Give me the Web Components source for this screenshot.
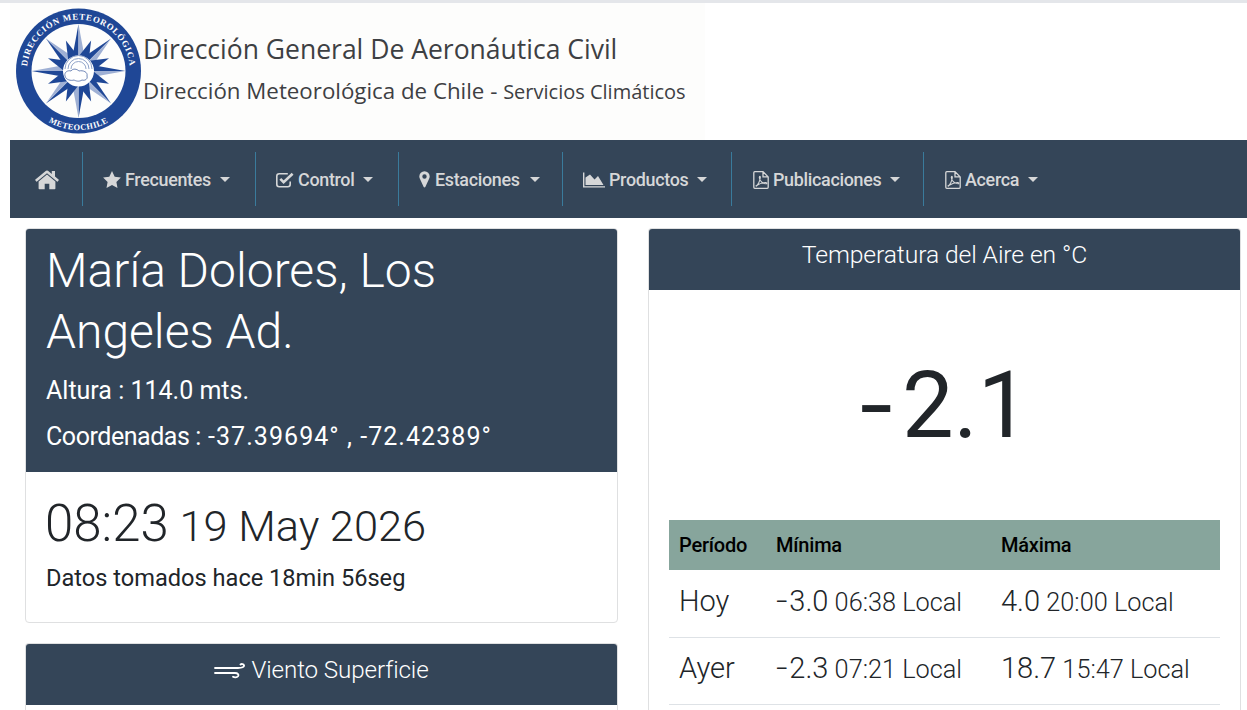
<!DOCTYPE html>
<html lang="es">
<head>
<meta charset="utf-8">
<title>Meteochile</title>
<style>
	html, body { margin: 0; padding: 0; background: #ffffff; overflow: hidden; height: 710px; }
	body { font-family: Roboto, sans-serif; color: #212529; border-top: 3px solid #e4e6ea; box-sizing: border-box; }
	.columns { display: grid; grid-template-columns: 593px 593px; column-gap: 30px; padding: 10px 6px 0 25px; align-items: start; }
	.stack { display: flex; flex-direction: column; gap: 20px; }
</style>
</head>
<body>
<met-banner></met-banner>
<met-nav>
	<nav-item icon="home" w="73"></nav-item>
	<nav-item icon="star" w="173" caret>Frecuentes</nav-item>
	<nav-item icon="check" w="143" caret>Control</nav-item>
	<nav-item icon="marker" w="164" caret>Estaciones</nav-item>
	<nav-item icon="chart" w="169" caret>Productos</nav-item>
	<nav-item icon="pdf" w="192" caret>Publicaciones</nav-item>
	<nav-item icon="pdf" w="130" caret last>Acerca</nav-item>
</met-nav>
<div class="columns">
	<div class="stack">
		<station-card></station-card>
		<met-card heading="Viento Superficie" icon="wind" size="24.2"><div style="height:5px"></div></met-card>
	</div>
	<met-card heading="Temperatura del Aire en °C" size="24.7">
		<temp-panel value="2.1"></temp-panel>
	</met-card>
</div>
<script>
const ICONS = {
	home: `<svg viewBox="0 0 24 20" width="24" height="20"><path fill="currentColor" d="M12 4.6 3.6 11.5v7a.8.8 0 0 0 .8.8h5.3v-5.6h4.6v5.6h5.3a.8.8 0 0 0 .8-.8v-7z"/><path fill="currentColor" d="M23.6 9.6 20 6.6V1h-3.2v2.9L13 .8a1.6 1.6 0 0 0-2 0L.4 9.6a.5.5 0 0 0-.1.7l1 1.1a.5.5 0 0 0 .7.1L12 3.2l10 8.3a.5.5 0 0 0 .7-.1l1-1.1a.5.5 0 0 0-.1-.7z"/></svg>`,
	star: `<svg viewBox="0 0 18 17" width="18" height="17"><path fill="currentColor" d="M9 0l2.700 5.700 6.200.9-4.500 4.300 1.100 6.100L9 14.100l-5.500 2.900 1.100-6.100L.1 6.600l6.200-.9z"/></svg>`,
	check: `<svg viewBox="0 0 18 16" width="18" height="16"><path fill="none" stroke="currentColor" stroke-width="1.6" d="M14.200 9.500v2.800a2.400 2.400 0 0 1-2.400 2.400H3.200a2.400 2.400 0 0 1-2.400-2.400V4.200a2.400 2.400 0 0 1 2.400-2.400h8.600"/><path fill="none" stroke="currentColor" stroke-width="2.600" d="M4.300 6.800l3.300 3.300L16.600 1.800"/></svg>`,
	marker: `<svg viewBox="0 0 11 17" width="11" height="17"><path fill="currentColor" fill-rule="evenodd" d="M5.500.3A5.200 5.200 0 0 0 .3 5.500c0 1 .3 1.700.7 2.500l3.700 7.900a.9.9 0 0 0 1.600 0L10 8c.4-.8.700-1.500.700-2.500A5.200 5.200 0 0 0 5.500.3zm0 7.400a2.200 2.200 0 1 1 0-4.400 2.200 2.200 0 0 1 0 4.400z"/></svg>`,
	chart: `<svg viewBox="0 0 22 16" width="22" height="16"><path fill="currentColor" d="M0 .5h1.400v13.700H22v1.400H0z"/><path fill="currentColor" d="M2.500 13V5.500L7 2.500l4.500 5 3.500-3.500 5.500 9z"/></svg>`,
	pdf: `<svg viewBox="0 0 16 18" width="16" height="18"><path fill="none" stroke="currentColor" stroke-width="1.300" d="M10 .7H1.800a1 1 0 0 0-1 1v14.600a1 1 0 0 0 1 1h12.400a1 1 0 0 0 1-1V5.900zM10 .7v5.200h5.200"/><path fill="none" stroke="currentColor" stroke-width="1.100" d="M3 15c2-1 4-5 4.300-8.500.2-1.500-1-1.500-1 0 .2 3 3 6 6.700 6.300 1.200 0 1.200-1.300 0-1.300-3-.2-6 1-8.800 2.700-.8.600-.8 1.300-1.200.8z"/></svg>`,
	wind: `<svg viewBox="0 0 32 17" width="32" height="17"><path fill="none" stroke="currentColor" stroke-width="1.800" stroke-linecap="round" d="M1 5h23c4 0 6.500-1 6-2.800-.4-1.300-2.500-1.500-3.500-.7M1 10h20c3 0 4 1.800 3 3.300-1 1.300-3.800 1.300-5 .4"/></svg>`
};

// the compass drawn by hand, points generated so both halves stay even
function compassPoints(cx, cy) {
	let out = '';
	for (let i = 0; i < 16; i += 2) {
		const a = i * Math.PI / 8 - Math.PI / 2;
		const r = i % 4 === 0 ? 47 : 46;
		const rIn = 15, w = 0.42;
		const tip = [cx + r * Math.cos(a), cy + r * Math.sin(a)];
		const l = [cx + rIn * Math.cos(a - w), cy + rIn * Math.sin(a - w)];
		const rr = [cx + rIn * Math.cos(a + w), cy + rIn * Math.sin(a + w)];
		const c = [cx + rIn * Math.cos(a), cy + rIn * Math.sin(a)];
		out += `<polygon fill="#1f4796" points="${tip} ${l} ${c}"/><polygon fill="#9fb0d4" points="${tip} ${rr} ${c}"/>`;
	}
	for (let i = 1; i < 16; i += 2) {
		const a = i * Math.PI / 8 - Math.PI / 2;
		const tip = [cx + 33 * Math.cos(a), cy + 33 * Math.sin(a)];
		const l = [cx + 15 * Math.cos(a - 0.36), cy + 15 * Math.sin(a - 0.36)];
		const rr = [cx + 15 * Math.cos(a + 0.36), cy + 15 * Math.sin(a + 0.36)];
		out += `<polygon fill="#1f4796" points="${tip} ${l} ${rr}"/>`;
	}
	return out;
}

class MetBanner extends HTMLElement {
	constructor() {
		super();
		this.attachShadow({ mode: 'open' }).innerHTML = `
			<style>
				:host { display: block; height: 137px; padding-left: 10px; box-sizing: border-box; }
				.img { width: 695px; height: 137px; background: #fdfdfc; display: flex; align-items: stretch; }
				svg { flex: none; width: 133px; height: 137px; }
				.txt { display: flex; flex-direction: column; font-family: "Open Sans", sans-serif; color: #3d4043; white-space: nowrap; }
				.l1 { font-size: 26.500px; line-height: 30px; margin-top: 31px; }
				.l2 { font-size: 22.300px; line-height: 30px; margin-top: 12px; }
				.l2 small { font-size: 20px; }
			</style>
			<div class="img">
				<svg viewBox="10 0 133 137">
					<circle cx="78.5" cy="68" r="62.5" fill="#1f4796"/>
					<circle cx="78.5" cy="68" r="47" fill="#fdfdfc"/>
					${compassPoints(78.5, 68)}
					<circle cx="78.5" cy="68" r="15.500" fill="#fff"/>
					<path fill="none" stroke="#8fa3c9" stroke-width="1" d="M65 66a13.500 13.500 0 0 1 27 0M68 66a10.500 10.500 0 0 1 21 0M71 66a7.500 7.500 0 0 1 15 0"/>
					<path fill="#fff" stroke="#5f78ae" stroke-width=".9" d="M65 73c-1-4 3-6 6-5 2-3 6-2 8 0 4-1 9 1 8 5 1 3-2 5-5 4-3 2-6 1-8 0-3 1-8 0-9-4z"/>
					<path id="arcTop" fill="none" d="M27 68a51.500 51.500 0 0 1 103 0"/>
					<path id="arcBot" fill="none" d="M27.700 98a59 59 0 0 0 101.600 0"/>
					<text font-family="Liberation Serif, serif" font-weight="700" font-size="8.800" fill="#fff" letter-spacing=".75"><textPath href="#arcTop" startOffset="50%" text-anchor="middle">DIRECCIÓN METEOROLÓGICA</textPath></text>
					<text font-family="Liberation Serif, serif" font-weight="700" font-size="8.300" fill="#fff" letter-spacing=".5"><textPath href="#arcBot" startOffset="50%" text-anchor="middle">METEOCHILE</textPath></text>
				</svg>
				<div class="txt">
					<div class="l1">Dirección General De Aeronáutica Civil</div>
					<div class="l2">Dirección Meteorológica de Chile - <small>Servicios Climáticos</small></div>
				</div>
			</div>`;
	}
}

class MetNav extends HTMLElement {
	constructor() {
		super();
		this.attachShadow({ mode: 'open' }).innerHTML = `
			<style>
				:host { display: flex; margin-left: 10px; height: 78px; background: #344558; align-items: center; }
			</style>
			<slot></slot>`;
	}
}

class NavItem extends HTMLElement {
	constructor() {
		super();
		const icon = ICONS[this.getAttribute('icon')] || '';
		const w = this.getAttribute('w');
		const caret = this.hasAttribute('caret') ? '<span class="caret"></span>' : '';
		this.attachShadow({ mode: 'open' }).innerHTML = `
			<style>
				:host {
					display: flex; align-items: center; box-sizing: border-box; width: ${w}px; height: 54px;
					padding: 1px 0 0 20px; gap: 4px; color: #d6d7d8; white-space: nowrap;
					font: 500 17.900px/1 Roboto, sans-serif; letter-spacing: -0.3px;
					border-right: 1px solid #3a7b9c;
				}
				:host([last]) { border-right: none; }
				:host([icon="home"]) { padding: 1px 0 0 25px; }
				:host([icon="marker"]) { gap: 5px; }
				:host([icon="pdf"]) { padding-left: 21px; }
				svg { display: block; flex: none; }
				.caret {
					margin-left: 5px; margin-top: -1px; width: 0; height: 0;
					border-left: 5.500px solid transparent; border-right: 5.500px solid transparent;
					border-top: 5px solid currentColor;
				}
			</style>
			${icon}<slot></slot>${caret}`;
	}
}

class MetCard extends HTMLElement {
	constructor() {
		super();
		const icon = ICONS[this.getAttribute('icon')] || '';
		this.attachShadow({ mode: 'open' }).innerHTML = `
			<style>
				/* these two run off the photo, so no bottom edge */
				:host { display: block; border: 1px solid #dfe0e1; border-bottom: none; border-radius: 4px 4px 0 0; background: #fff; overflow: hidden; }
				.head {
					display: flex; justify-content: center; align-items: center; gap: 5px;
					height: 62px; box-sizing: border-box; padding-bottom: 7px; background: #344558; color: #fff;
					font: 300 ${this.getAttribute('size')}px/1 Roboto, sans-serif; letter-spacing: -0.1px;
					margin: -1px -1px 0;
				}
				svg { display: block; margin-top: 2px; }
			</style>
			<div class="head">${icon}<span>${this.getAttribute('heading')}</span></div>
			<slot></slot>`;
	}
}

class StationCard extends HTMLElement {
	constructor() {
		super();
		this.attachShadow({ mode: 'open' }).innerHTML = `
			<style>
				:host { display: block; border: 1px solid #dfe0e1; border-radius: 4px; overflow: hidden; font-family: Roboto, sans-serif; }
				.head { background: #344558; color: #fff; padding: 13px 21px 0 20px; height: 244px; box-sizing: border-box; margin: -1px -1px 0; }
				h1 { margin: 0 0 0 1px; font-size: 48px; font-weight: 300; line-height: 60.500px; }
				.sub { font-size: 25px; line-height: 46px; margin-left: 1px; }
				.sub.first { margin-top: 6px; }
				.sub.coords { letter-spacing: 1.05px; }
				.sub.coords span { letter-spacing: -.45px; }
				.body { height: 150px; box-sizing: border-box; padding: 25px 21px 0 20px; }
				.when { font-size: 43.400px; line-height: 54px; font-weight: 300; }
				.when b { font-size: 51px; font-weight: 300; margin-left: -1px; }
				.ago { font-size: 23.600px; line-height: 30px; margin-top: 9px; }
			</style>
			<div class="head">
				<h1>María Dolores, Los Angeles Ad.</h1>
				<div class="sub first">Altura : 114.0 mts.</div>
				<div class="sub coords"><span>Coordenadas :</span> -37.39694° , -72.42389°</div>
			</div>
			<div class="body">
				<div class="when"><b>08:23</b> 19 May 2026</div>
				<div class="ago">Datos tomados hace 18min 56seg</div>
			</div>`;
	}
}

class TempPanel extends HTMLElement {
	constructor() {
		super();
		this.attachShadow({ mode: 'open' }).innerHTML = `
			<style>
				:host { display: block; padding: 0 20px 5px; font-family: Roboto, sans-serif; }
				.val { height: 230px; display: flex; align-items: center; justify-content: center; font-size: 92px; font-weight: 400; padding: 0 0 0 4px; box-sizing: border-box; }
				/* the hyphen in the source font is much longer than Roboto's */
				i { display: inline-block; font-style: normal; transform-origin: 0 50%; }
				.val i { margin-right: 13px; transform: translateX(-3px) scaleX(1.28); }
				table { width: 551px; border-collapse: collapse; table-layout: fixed; }
				th { height: 50px; padding: 0 0 0 11px; background: #87a59c; color: #000; text-align: left; font-size: 20px; font-weight: 500; letter-spacing: -0.2px; }
				td { height: 67px; padding: 0 0 5px 11px; border-bottom: 1px solid #dee2e6; font-size: 25.300px; font-weight: 300; white-space: nowrap; box-sizing: border-box; }
				th:first-child, td:first-child { padding-left: 10px; }
				td:first-child { font-size: 29px; }
				td b { font-weight: 300; font-size: 29px; }
				td i { margin-right: 5px; transform: scaleX(1.4); }
			</style>
			<div class="val"><i>-</i>${this.getAttribute('value')}</div>
			<table>
				<colgroup><col style="width:96px"><col style="width:225px"><col></colgroup>
				<tr><th>Período</th><th>Mínima</th><th>Máxima</th></tr>
				<tr><td>Hoy</td><td><b><i>-</i>3.0</b> 06:38 Local</td><td><b>4.0</b> 20:00 Local</td></tr>
				<tr><td>Ayer</td><td><b><i>-</i>2.3</b> 07:21 Local</td><td><b>18.7</b> 15:47 Local</td></tr>
			</table>`;
	}
}

customElements.define('met-banner', MetBanner);
customElements.define('met-nav', MetNav);
customElements.define('nav-item', NavItem);
customElements.define('met-card', MetCard);
customElements.define('station-card', StationCard);
customElements.define('temp-panel', TempPanel);
</script>
</body>
</html>
